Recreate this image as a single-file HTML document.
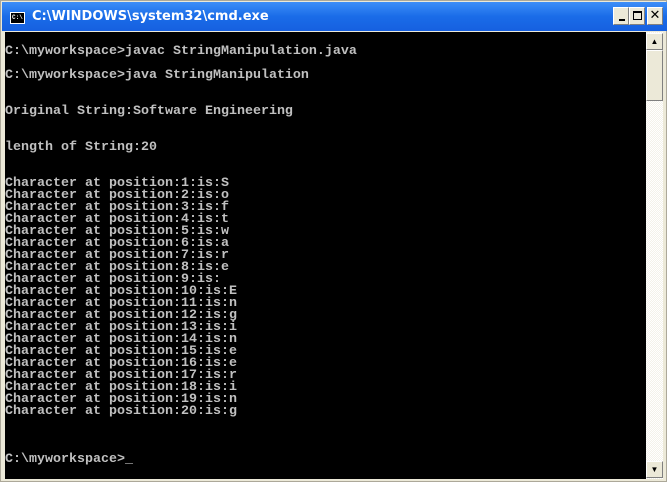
<!DOCTYPE html>
<html><head><style>
*{margin:0;padding:0;box-sizing:border-box}
body{width:669px;height:484px;background:#fff;position:relative;overflow:hidden}
#win{position:absolute;left:0;top:0;width:667px;height:482px;background:#ece9d8;border:1px solid #aca899}
#title{position:absolute;left:1px;top:1px;width:665px;height:29px;background:linear-gradient(#3d8ef8,#1a6ce8 50%,#1660e0);}
#title .t{position:absolute;left:30px;top:7px;color:#fff;font:bold 13px "DejaVu Sans","Liberation Sans",sans-serif;letter-spacing:0}
#icon{position:absolute;left:8px;top:10px;width:15px;height:12px;background:#000;border:1px solid #fff;color:#fff;font:bold 6px "Liberation Mono",monospace;line-height:9px;padding-left:1px}
.btn{position:absolute;top:5px;width:16px;height:18px;background:#ece9d8;border:1px solid;border-color:#fff #808080 #808080 #fff}
#con{position:absolute;left:4px;top:31px;width:641px;height:447px;background:#000;color:#c0c0c0;font:bold 13.33px "Liberation Mono",monospace;line-height:12px;white-space:pre;padding:2px 0 0 0;overflow:hidden}
#sb{position:absolute;left:645px;top:31px;width:17px;height:447px;background:repeating-conic-gradient(#f4f2ea 0 25%,#fff 0 50%) 0 0/2px 2px}
.sbb{position:absolute;left:0;width:17px;height:17px;background:#ece9d8;border:1px solid;border-color:#fff #808080 #808080 #fff}
</style></head><body>
<div id="win">
<div id="title"><div id="icon">C:\</div><div class="t">C:\WINDOWS\system32\cmd.exe</div>
<div class="btn" style="left:611px"><div style="position:absolute;left:5px;top:11px;width:6px;height:2px;background:#000"></div></div>
<div class="btn" style="left:627px"><div style="position:absolute;left:3px;top:3px;width:9px;height:9px;border:1px solid #000;border-top-width:2px"></div></div>
<div class="btn" style="left:645px;font:bold 13px 'DejaVu Sans',sans-serif;text-align:center;line-height:16px">✕</div>
</div>
<div id="con">
C:\myworkspace>javac StringManipulation.java

C:\myworkspace>java StringManipulation


Original String:Software Engineering


length of String:20


Character at position:1:is:S
Character at position:2:is:o
Character at position:3:is:f
Character at position:4:is:t
Character at position:5:is:w
Character at position:6:is:a
Character at position:7:is:r
Character at position:8:is:e
Character at position:9:is:
Character at position:10:is:E
Character at position:11:is:n
Character at position:12:is:g
Character at position:13:is:i
Character at position:14:is:n
Character at position:15:is:e
Character at position:16:is:e
Character at position:17:is:r
Character at position:18:is:i
Character at position:19:is:n
Character at position:20:is:g



C:\myworkspace>_</div>
<div id="sb">
<div class="sbb" style="top:1px;font:8px sans-serif;text-align:center;line-height:15px">▲</div>
<div class="sbb" style="top:18px;height:51px"></div>
<div class="sbb" style="top:429px;font:8px sans-serif;text-align:center;line-height:15px">▼</div>
</div>
</div>
</body></html>
